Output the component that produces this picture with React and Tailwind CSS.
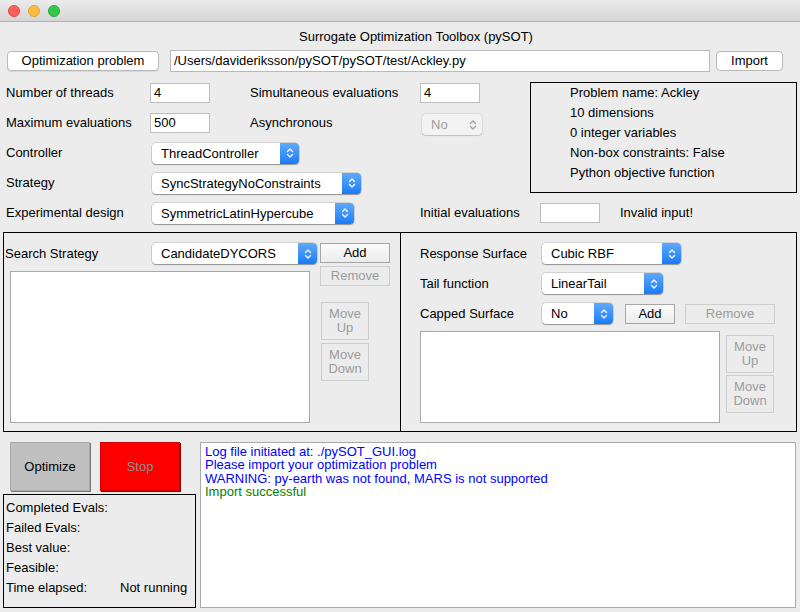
import React from "react";

const font = { fontFamily: '"Liberation Sans", Arial, sans-serif' };

const Chevrons = ({ color = "white" }) => (
  <svg width="8" height="12" viewBox="0 0 8 12" fill="none">
    <path d="M1.5 4.5 L4 2 L6.5 4.5" stroke={color} strokeWidth="1.3" strokeLinecap="round" strokeLinejoin="round" />
    <path d="M1.5 7.5 L4 10 L6.5 7.5" stroke={color} strokeWidth="1.3" strokeLinecap="round" strokeLinejoin="round" />
  </svg>
);

const Select = ({ value, className = "" }) => (
  <div
    className={`flex items-stretch bg-white rounded-[4px] shadow-[0_0_0_0.5px_rgba(0,0,0,0.22),0_1px_1px_rgba(0,0,0,0.3)] overflow-hidden h-[21px] ${className}`}
  >
    <div className="flex-1 pl-[9px] leading-[21px] text-black whitespace-nowrap overflow-hidden">
      {value}
    </div>
    <div className="w-[19px] flex items-center justify-center bg-gradient-to-b from-[#5fa9fb] to-[#137bf7]">
      <Chevrons />
    </div>
  </div>
);

const TextInput = ({ value = "", className = "" }) => (
  <div
    className={`h-[20px] bg-white border border-[#bdbdbd] pl-[3px] leading-[18px] text-black whitespace-nowrap ${className}`}
  >
    {value}
  </div>
);

const Btn = ({ children, className = "" }) => (
  <div
    className={`flex items-center justify-center h-[20px] bg-gradient-to-b from-[#fbfbfb] to-[#ececec] border border-[#a6a6a6] text-black ${className}`}
  >
    {children}
  </div>
);

const OffBtn = ({ children, className = "" }) => (
  <div
    className={`flex items-center justify-center text-center bg-[#ececec] border border-[#cdcdcd] text-[#9b9b9b] leading-[14px] ${className}`}
  >
    {children}
  </div>
);

const Row = ({ children, className = "" }) => (
  <div className={`flex items-center h-[30px] ${className}`}>{children}</div>
);

export default function App() {
  return (
    <div
      className="w-[800px] h-[612px] bg-[#ececec] text-[13px] text-black overflow-hidden"
      style={font}
    >
      {/* Title bar */}
      <div className="h-[22px] flex items-center gap-[8px] pl-[8px] bg-gradient-to-b from-[#ebebeb] to-[#d6d6d6] border-b border-[#b1b1b1]">
        <div className="w-[12px] h-[12px] rounded-full bg-[#fc605c] border border-[#de4a46]" />
        <div className="w-[12px] h-[12px] rounded-full bg-[#fdbc40] border border-[#dea236]" />
        <div className="w-[12px] h-[12px] rounded-full bg-[#34c84a] border border-[#27aa35]" />
      </div>

      {/* Header */}
      <div className="pt-[7px] text-center leading-[15px] pl-[32px]">
        Surrogate Optimization Toolbox (pySOT)
      </div>
      <div className="flex items-center h-[22px] mt-[6px] pl-[7px]">
        <div className="w-[152px] h-[20px] flex items-center justify-center bg-white rounded-[4px] border border-[#b9b9b9] shadow-[0_1px_0_rgba(0,0,0,0.08)]">
          Optimization problem
        </div>
        <div className="ml-[11px] w-[540px] h-[22px] bg-white border border-[#b9b9b9] pl-[3px] leading-[20px]">
          /Users/davideriksson/pySOT/pySOT/test/Ackley.py
        </div>
        <div className="ml-[6px] w-[67px] h-[20px] flex items-center justify-center bg-white rounded-[4px] border border-[#b9b9b9]">
          Import
        </div>
      </div>

      {/* Settings */}
      <div className="flex mt-[6px]">
        <div className="w-[530px] pl-[6px]">
          <Row>
            <div className="w-[144px]">Number of threads</div>
            <TextInput value="4" className="w-[60px]" />
            <div className="ml-[40px] w-[170px]">Simultaneous evaluations</div>
            <TextInput value="4" className="w-[60px]" />
          </Row>
          <Row>
            <div className="w-[144px]">Maximum evaluations</div>
            <TextInput value="500" className="w-[60px]" />
            <div className="ml-[40px] w-[172px]">Asynchronous</div>
            <div className="mt-[3px] w-[60px] h-[21px] flex items-center justify-between pl-[9px] pr-[5px] bg-[#f3f3f3] rounded-[4px] shadow-[0_0_0_0.5px_rgba(0,0,0,0.15),0_1px_1px_rgba(0,0,0,0.12)] text-[#9c9c9c]">
              <span>No</span>
              <Chevrons color="#a0a0a0" />
            </div>
          </Row>
          <Row>
            <div className="w-[146px]">Controller</div>
            <Select value="ThreadController" className="w-[147px]" />
          </Row>
          <Row>
            <div className="w-[146px]">Strategy</div>
            <Select value="SyncStrategyNoConstraints" className="w-[209px]" />
          </Row>
        </div>
        <div className="mt-[4px] w-[267px] h-[111px] border border-black pl-[39px] leading-[20px]">
          <div>Problem name: Ackley</div>
          <div>10 dimensions</div>
          <div>0 integer variables</div>
          <div>Non-box constraints: False</div>
          <div>Python objective function</div>
        </div>
      </div>
      <Row className="pl-[6px]">
        <div className="w-[146px]">Experimental design</div>
        <Select value="SymmetricLatinHypercube" className="w-[202px]" />
        <div className="ml-[66px] w-[120px]">Initial evaluations</div>
        <TextInput className="w-[60px]" />
        <div className="ml-[20px]">Invalid input!</div>
      </Row>

      {/* Panels */}
      <div className="flex mt-[4px] ml-[3px]">
        <div className="w-[398px] h-[200px] border border-black flex pt-[10px]">
          <div className="w-[313px]">
            <div className="flex items-center">
              <div className="w-[148px] pl-[1px]">Search Strategy</div>
              <Select value="CandidateDYCORS" className="w-[165px]" />
            </div>
            <div className="mt-[7px] ml-[6px] w-[300px] h-[152px] bg-white border border-[#a9a9a9]" />
          </div>
          <div className="ml-[3px]">
            <Btn className="w-[70px]">Add</Btn>
            <OffBtn className="mt-[3px] w-[70px] h-[20px]">Remove</OffBtn>
            <OffBtn className="mt-[16px] ml-[1px] w-[48px] h-[38px]">
              Move
              <br />
              Up
            </OffBtn>
            <OffBtn className="mt-[3px] ml-[1px] w-[48px] h-[38px]">
              Move
              <br />
              Down
            </OffBtn>
          </div>
        </div>
        <div className="w-[396px] h-[200px] border-y border-r border-black pl-[19px] pt-[10px]">
          <div className="flex items-center">
            <div className="w-[122px]">Response Surface</div>
            <Select value="Cubic RBF" className="w-[139px]" />
          </div>
          <div className="flex items-center mt-[9px]">
            <div className="w-[122px]">Tail function</div>
            <Select value="LinearTail" className="w-[121px]" />
          </div>
          <div className="flex items-center mt-[9px]">
            <div className="w-[122px]">Capped Surface</div>
            <Select value="No" className="w-[71px]" />
            <Btn className="ml-[12px] w-[50px]">Add</Btn>
            <OffBtn className="ml-[10px] w-[90px] h-[20px]">Remove</OffBtn>
          </div>
          <div className="flex mt-[7px]">
            <div className="w-[300px] h-[92px] bg-white border border-[#a9a9a9]" />
            <div className="ml-[6px]">
              <OffBtn className="mt-[4px] w-[48px] h-[38px]">
                Move
                <br />
                Up
              </OffBtn>
              <OffBtn className="mt-[2px] w-[48px] h-[38px]">
                Move
                <br />
                Down
              </OffBtn>
            </div>
          </div>
        </div>
      </div>

      {/* Run controls and log */}
      <div className="flex mt-[10px] ml-[3px]">
        <div className="w-[193px]">
          <div className="flex pl-[7px]">
            <div className="w-[80px] h-[49px] flex items-center justify-center bg-[#c0c0c0] border border-[#a8a8a8] shadow-[1px_1px_0_#7a7a7a]">
              Optimize
            </div>
            <div className="ml-[10px] w-[80px] h-[49px] flex items-center justify-center bg-[#ff0000] border border-[#d40000] shadow-[1px_1px_0_#8a0000] text-[#8c8c8c]">
              Stop
            </div>
          </div>
          <div className="mt-[3px] w-[193px] h-[114px] border border-black pl-[2px] pt-[3px] leading-[20px]">
            <div>Completed Evals:</div>
            <div>Failed Evals:</div>
            <div>Best value:</div>
            <div>Feasible:</div>
            <div className="flex">
              <div className="w-[114px]">Time elapsed:</div>
              <div>Not running</div>
            </div>
          </div>
        </div>
        <div className="ml-[4px] w-[596px] h-[166px] bg-white border border-[#a9a9a9] pl-[4px] pt-[2px] leading-[13.4px]">
          <div className="text-[#0000ff]">Log file initiated at: ./pySOT_GUI.log</div>
          <div className="text-[#0000ff]">Please import your optimization problem</div>
          <div className="text-[#0000ff]">WARNING: py-earth was not found, MARS is not supported</div>
          <div className="text-[#008000]">Import successful</div>
        </div>
      </div>
    </div>
  );
}
